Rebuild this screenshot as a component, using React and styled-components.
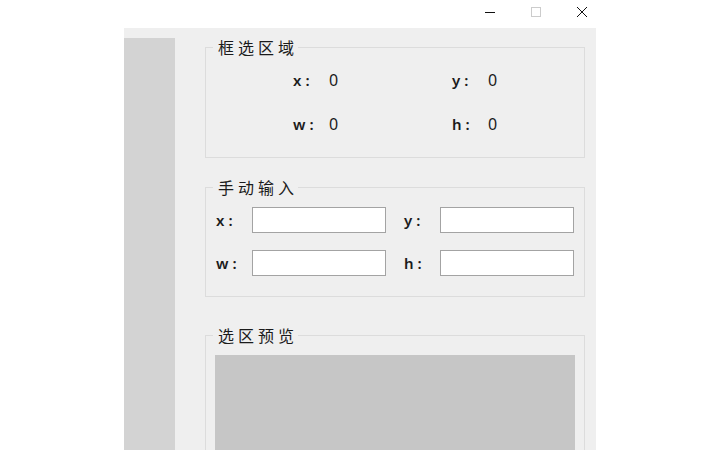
import React from 'react'
import styled, { createGlobalStyle } from 'styled-components'

const GlobalStyle = createGlobalStyle`
  html, body {
    margin: 0;
    padding: 0;
    background: #ffffff;
    height: 450px;
    overflow: hidden;
  }
  * { box-sizing: border-box; }
`

const TitleBar = styled.div`
  height: 28px;
  display: flex;
  justify-content: flex-end;
  padding-right: 115px;
`

const CaptionButton = styled.div`
  width: 46px;
  height: 28px;
  display: flex;
  align-items: center;
  justify-content: center;
  color: ${({ $disabled }) => ($disabled ? '#cccccc' : '#111111')};
  padding-bottom: 4px;
`

const Panel = styled.div`
  margin-left: 124px;
  width: 472px;
  height: 422px;
  background: #efefef;
  display: flex;
  padding-top: 10px;
`

const SideStrip = styled.div`
  flex: 0 0 51px;
  background: #d3d3d3;
`

const Content = styled.div`
  flex: 1;
  min-width: 0;
  padding: 9px 11px 0 30px;
  display: flex;
  flex-direction: column;
`

const Group = styled.div`
  position: relative;
  border: 1px solid #dcdcdc;
  margin-top: ${({ $gap }) => $gap || 0}px;
`

const Legend = styled.span`
  position: absolute;
  top: -11px;
  left: 7px;
  padding: 0 0 0 5px;
  line-height: 20px;
  font-family: "Noto Sans CJK SC", sans-serif;
  font-size: 16px;
  letter-spacing: 4px;
  color: #1b1b1b;
  background: #efefef;
`

const ReadoutGrid = styled.div`
  display: grid;
  grid-template-columns: 159px 159px;
  grid-auto-rows: 44px;
  padding: 10px 0 11px 87px;
`

const Readout = styled.div`
  display: flex;
  align-items: center;
  font-family: "Noto Sans", sans-serif;
  font-size: 16px;
  color: #1b1b1b;
`

const Label = styled.span`
  flex: 0 0 36px;
  font-weight: 600;
  letter-spacing: 4px;
  font-family: "Noto Sans", sans-serif;
  font-size: 15px;
  color: #1b1b1b;
`

const InputGrid = styled.div`
  display: grid;
  grid-template-columns: 170px 170px;
  column-gap: 18px;
  row-gap: 17px;
  padding: 19px 10px 20px 10px;
`

const Field = styled.label`
  display: flex;
  align-items: center;
`

const Input = styled.input`
  flex: 0 0 134px;
  width: 134px;
  height: 26px;
  border: 1px solid #a3a3a3;
  background: #ffffff;
  padding: 0 4px;
  font-size: 13px;
  outline: none;
`

const Preview = styled.div`
  margin: 19px 9px 0 9px;
  height: 200px;
  background: #c6c6c6;
`

const readouts = [
  { name: 'x', value: 0 },
  { name: 'y', value: 0 },
  { name: 'w', value: 0 },
  { name: 'h', value: 0 },
]

const App = () => {
  return (
    <>
      <GlobalStyle />
      <TitleBar>
        <CaptionButton>
          <svg width="10" height="10" viewBox="0 0 10 10">
            <line x1="0" y1="5.5" x2="10" y2="5.5" stroke="currentColor" strokeWidth="1" />
          </svg>
        </CaptionButton>
        <CaptionButton $disabled>
          <svg width="10" height="10" viewBox="0 0 10 10">
            <rect x="0.5" y="0.5" width="9" height="9" fill="none" stroke="currentColor" strokeWidth="1" />
          </svg>
        </CaptionButton>
        <CaptionButton>
          <svg width="10" height="10" viewBox="0 0 10 10">
            <path d="M0 0 L10 10 M10 0 L0 10" stroke="currentColor" strokeWidth="1" />
          </svg>
        </CaptionButton>
      </TitleBar>

      <Panel>
        <SideStrip />
        <Content>
          {/* 框选区域 */}
          <Group>
            <Legend>框选区域</Legend>
            <ReadoutGrid>
              {readouts.map((r) => (
                <Readout key={r.name}>
                  <Label>{r.name}:</Label>
                  {r.value}
                </Readout>
              ))}
            </ReadoutGrid>
          </Group>

          {/* 手动输入 */}
          <Group $gap={29}>
            <Legend>手动输入</Legend>
            <InputGrid>
              {readouts.map((r) => (
                <Field key={r.name}>
                  <Label>{r.name}:</Label>
                  <Input type="text" />
                </Field>
              ))}
            </InputGrid>
          </Group>

          {/* 选区预览 */}
          <Group $gap={38}>
            <Legend>选区预览</Legend>
            <Preview />
          </Group>
        </Content>
      </Panel>
    </>
  )
}

export default App
